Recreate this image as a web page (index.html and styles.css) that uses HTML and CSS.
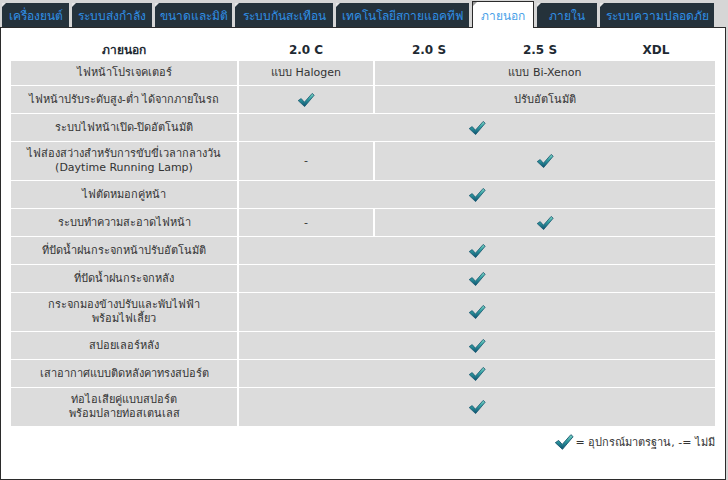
FILE: index.html
```html
<!DOCTYPE html>
<html lang="th">
<head>
<meta charset="utf-8">
<title>ภายนอก</title>
<link rel="stylesheet" href="styles.css">
</head>
<body>
<svg width="0" height="0" class="defs">
  <defs>
    <linearGradient id="chk" x1="0" y1="0" x2="0" y2="1">
      <stop offset="0" stop-color="#7fd6c4"/>
      <stop offset="0.45" stop-color="#2e9aa0"/>
      <stop offset="1" stop-color="#0c4f6e"/>
    </linearGradient>
    <symbol id="check" viewBox="0 0 18 16">
      <path d="M1.2 8.6 L4.2 6.6 L7.4 10.2 L15.2 1.4 L17.2 3.2 L7.6 14.6 Z" fill="url(#chk)" stroke="#15566f" stroke-width="0.8" stroke-linejoin="round"/>
    </symbol>
  </defs>
</svg>
<div class="page">
  <div class="tabs">
    <div class="tab t1">เครื่องยนต์</div>
    <div class="tab t2">ระบบส่งกำลัง</div>
    <div class="tab t3">ขนาดและมิติ</div>
    <div class="tab t4">ระบบกันสะเทือน</div>
    <div class="tab t5">เทคโนโลยีสกายแอคทีฟ</div>
    <div class="tab t6 active">ภายนอก</div>
    <div class="tab t7">ภายใน</div>
    <div class="tab t8">ระบบความปลอดภัย</div>
  </div>
  <div class="panel">
    <table class="spec">
      <colgroup>
        <col class="c1"><col class="c2"><col class="c3"><col class="c4"><col class="c5">
      </colgroup>
      <thead>
        <tr class="head">
          <th>ภายนอก</th><th>2.0 C</th><th>2.0 S</th><th>2.5 S</th><th>XDL</th>
        </tr>
      </thead>
      <tbody>
        <tr class="rt">
          <td>ไฟหน้าโปรเจคเตอร์</td><td>แบบ Halogen</td><td colspan="3">แบบ Bi-Xenon</td>
        </tr>
        <tr class="ri">
          <td>ไฟหน้าปรับระดับสูง-ต่ำ ได้จากภายในรถ</td>
          <td><svg class="ck"><use href="#check"/></svg></td>
          <td colspan="3">ปรับอัตโนมัติ</td>
        </tr>
        <tr class="ri">
          <td>ระบบไฟหน้าเปิด-ปิดอัตโนมัติ</td>
          <td colspan="4"><svg class="ck"><use href="#check"/></svg></td>
        </tr>
        <tr class="r2">
          <td>ไฟส่องสว่างสำหรับการขับขี่เวลากลางวัน<br>(Daytime Running Lamp)</td>
          <td>-</td>
          <td colspan="3"><svg class="ck"><use href="#check"/></svg></td>
        </tr>
        <tr class="ri">
          <td>ไฟตัดหมอกคู่หน้า</td>
          <td colspan="4"><svg class="ck"><use href="#check"/></svg></td>
        </tr>
        <tr class="ri">
          <td>ระบบทำความสะอาดไฟหน้า</td>
          <td>-</td>
          <td colspan="3"><svg class="ck"><use href="#check"/></svg></td>
        </tr>
        <tr class="ri">
          <td>ที่ปัดน้ำฝนกระจกหน้าปรับอัตโนมัติ</td>
          <td colspan="4"><svg class="ck"><use href="#check"/></svg></td>
        </tr>
        <tr class="ri">
          <td>ที่ปัดน้ำฝนกระจกหลัง</td>
          <td colspan="4"><svg class="ck"><use href="#check"/></svg></td>
        </tr>
        <tr class="r2">
          <td>กระจกมองข้างปรับและพับไฟฟ้า<br>พร้อมไฟเลี้ยว</td>
          <td colspan="4"><svg class="ck"><use href="#check"/></svg></td>
        </tr>
        <tr class="ri">
          <td>สปอยเลอร์หลัง</td>
          <td colspan="4"><svg class="ck"><use href="#check"/></svg></td>
        </tr>
        <tr class="ri">
          <td>เสาอากาศแบบติดหลังคาทรงสปอร์ต</td>
          <td colspan="4"><svg class="ck"><use href="#check"/></svg></td>
        </tr>
        <tr class="r2">
          <td>ท่อไอเสียคู่แบบสปอร์ต<br>พร้อมปลายท่อสเตนเลส</td>
          <td colspan="4"><svg class="ck"><use href="#check"/></svg></td>
        </tr>
      </tbody>
    </table>
    <div class="legend">
      <svg class="ck lg"><use href="#check"/></svg>
      <span>= อุปกรณ์มาตรฐาน, -= ไม่มี</span>
    </div>
  </div>
</div>
</body>
</html>
```

FILE: styles.css
```css
* { box-sizing: border-box; }
html, body {
  margin: 0;
  padding: 0;
  background: #d6d6d6;
  font-family: Tahoma, "DejaVu Sans", "Noto Sans", sans-serif;
  font-size: 11px;
  color: #333;
}
.defs { position: absolute; width: 0; height: 0; }
.page {
  width: 726px;
  height: 480px;
  display: flex;
  flex-direction: column;
}
.tabs {
  display: flex;
  gap: 3px;
  padding: 3px 0 0 2px;
  height: 27px;
  flex: none;
}
.tab {
  position: relative;
  height: 24px;
  background: #25323b;
  color: #2f8fe6;
  display: flex;
  align-items: center;
  justify-content: center;
  white-space: nowrap;
  font-size: 12px;
  padding-top: 1px;
}
.tab::before {
  content: "";
  position: absolute;
  left: 0;
  top: 0;
  border-style: solid;
  border-width: 4px 4px 0 0;
  border-color: #e6e6e6 transparent transparent transparent;
}
.tab.active {
  background: #fff;
  color: #4a9fe8;
  margin-top: -2px;
  border: 1px solid #2b2b2b;
  border-bottom: none;
  z-index: 1;
  margin-bottom: -1px;
  height: 27px;
}
.tab.active::before {
  border-color: #9a9a9a transparent transparent transparent;
}
.t1 { width: 67px; }
.t2 { width: 80px; }
.t3 { width: 77px; }
.t4 { width: 98px; }
.t5 { width: 133px; }
.t6 { width: 62px; }
.t7 { width: 60px; }
.t8 { width: 114px; }
.panel {
  flex: 1;
  background: #fff;
  border: 1px solid #2b2b2b;
  padding: 10px 8px 0 8px;
}
.spec {
  width: 708px;
  border-collapse: separate;
  border-spacing: 2px 1px;
  table-layout: fixed;
}
.c1 { width: 226px; }
.c2 { width: 134px; }
.c3 { width: 108px; }
.c4 { width: 110px; }
.c5 { width: 118px; }
.spec th {
  height: 21px;
  font-weight: bold;
  color: #1e2a33;
  font-size: 12px;
  text-align: center;
  padding: 0;
  background: #fff;
}
.spec td {
  background: #dcdcdc;
  text-align: center;
  padding: 0 4px;
  line-height: 14px;
  vertical-align: middle;
}
.rt td { height: 24px; }
.ri td { height: 27px; }
.r2 td { height: 38px; }
.ck {
  width: 18px;
  height: 16px;
  display: inline-block;
  vertical-align: middle;
}
.legend {
  width: 708px;
  display: flex;
  justify-content: flex-end;
  align-items: center;
  gap: 2px;
  margin-top: 6px;
  padding-right: 2px;
  color: #333;
}
.legend .lg {
  width: 20px;
  height: 18px;
}
```
